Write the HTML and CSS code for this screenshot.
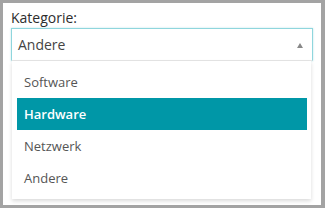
FILE: index.html
```html
<!DOCTYPE html>
<html lang="de">
<head>
    <meta charset="UTF-8">
    <title>Kategorie</title>
    <link rel="stylesheet" href="styles.css">
</head>
<body>
<div class="panel">
    <label class="field-label" for="kategorie">Kategorie:</label>
    <div class="select open">
        <div class="select-value" id="kategorie">
            <span>Andere</span>
            <span class="caret"></span>
        </div>
        <ul class="select-menu">
            <li>Software</li>
            <li class="active">Hardware</li>
            <li>Netzwerk</li>
            <li>Andere</li>
        </ul>
    </div>
</div>
</body>
</html>
```

FILE: styles.css
```css
html, body {
    margin: 0;
    height: 100%;
}

body {
    background-color: #a3a3a3;
    padding: 3px 4px 3px 3px;
    box-sizing: border-box;
    font-family: "Open Sans", "Liberation Sans", sans-serif;
    color: #333;
}

.panel {
    background-color: #fff;
    height: 100%;
    padding: 5px 8px 0 8px;
    box-sizing: border-box;
}

.field-label {
    display: block;
    font-size: 14px;
    line-height: 19px;
    margin-bottom: 1px;
    color: #2d2d2d;
}

.select {
    position: relative;
}

.select-value {
    display: flex;
    align-items: center;
    justify-content: space-between;
    height: 31px;
    padding: 0 9px 0 6px;
    border: 1px solid #8fd6dd;
    border-bottom-color: #e6e6e6;
    box-shadow: 0 0 2px rgba(0, 151, 167, 0.25);
    font-size: 14px;
    color: #444;
}

.caret {
    width: 0;
    height: 0;
    margin-top: 2px;
    border-left: 3px solid transparent;
    border-right: 3px solid transparent;
    border-bottom: 5px solid #888;
}

.select-menu {
    list-style: none;
    margin: 0 2px 0 1px;
    padding: 5px 4px 5px 5px;
    background-color: #fff;
    box-shadow: 0 2px 4px rgba(0, 0, 0, 0.15);
}

.select-menu li {
    height: 32px;
    line-height: 32px;
    padding: 0 7px;
    font-size: 13px;
    color: #555;
}

.select-menu li.active {
    background-color: #0097a7;
    color: #fff;
    font-weight: 600;
}
```
